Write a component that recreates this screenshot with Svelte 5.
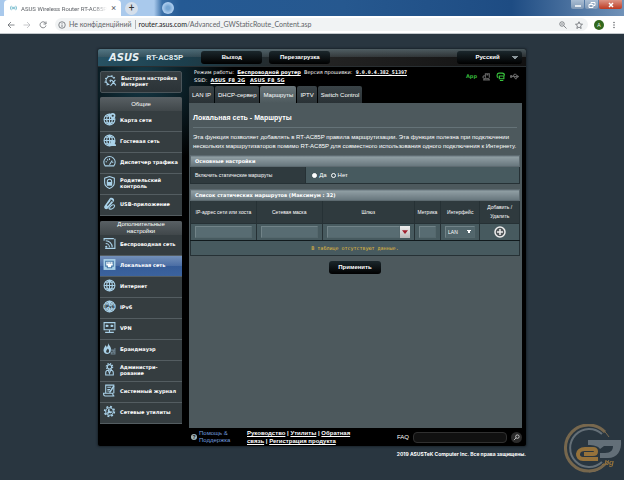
<script lang="ts">
  const generalMenu = [
    { label: 'Карта сети', icon: 'map' },
    { label: 'Гостевая сеть', icon: 'guest' },
    { label: 'Диспетчер трафика', icon: 'gauge' },
    { label: 'Родительский контроль', icon: 'shield' },
    { label: 'USB-приложение', icon: 'usb' }
  ];

  const advancedMenu = [
    { label: 'Беспроводная сеть', icon: 'wifi' },
    { label: 'Локальная сеть', icon: 'lan', active: true },
    { label: 'Интернет', icon: 'globe' },
    { label: 'IPv6', icon: 'ipv6' },
    { label: 'VPN', icon: 'vpn' },
    { label: 'Брандмауэр', icon: 'fire' },
    { label: 'Администри-рование', icon: 'admin' },
    { label: 'Системный журнал', icon: 'log' },
    { label: 'Сетевые утилиты', icon: 'tools' }
  ];

  const menus = [
    { title: 'Общие', items: generalMenu },
    { title: 'Дополнительные настройки', items: advancedMenu }
  ];

  const tabs = ['LAN IP', 'DHCP-сервер', 'Маршруты', 'IPTV', 'Switch Control'];

  let activeTab = $state('Маршруты');
  let staticRoutes = $state('yes');
</script>

{#snippet gear()}
  <circle cx="12" cy="12" r="7" />
  <circle cx="12" cy="12" r="9" stroke-width="3" stroke-dasharray="3.5 3.57" />
{/snippet}

{#snippet globe()}
  <circle cx="12" cy="12" r="10" />
  <path d="M2 12h20M4 6h16M4 18h16M12 2v20M12 2c-7 5-7 15 0 20M12 2c7 5 7 15 0 20" />
{/snippet}

{#snippet menuIcon(name: string)}
  <svg class="icon" viewBox="0 0 24 24" aria-hidden="true">
    {#if name === 'quick'}
      <path d="M10 20a8 8 0 1 1 9-11M7 3l1 3M2 8l3 1M1 15h4M5 21l2-3M15 2l-1 3M20 6l-2 2" />
      <path d="M11 11l4 1 7 9M21 11l-9 11M11 11l1 4" />
    {:else if name === 'map'}
      {@render globe()}
      <path class="solid" d="M18 0a5 5 0 0 1 5 5c0 4-5 8-5 8s-5-4-5-8a5 5 0 0 1 5-5z" />
      <circle class="hole" cx="18" cy="5" r="2" />
    {:else if name === 'guest'}
      {@render globe()}
      <path class="solid" d="M11 22c0-4 2-5 4-5a3 3 0 1 1 3 0 3 3 0 1 1 3 0c2 1 3 2 3 5z" />
    {:else if name === 'gauge'}
      <path d="M4 20a10.500 10.500 0 1 1 16 0zM12 18l5-8M5 12l2 1M8 8l1 2M12 6v3M19 13l-2 1" />
    {:else if name === 'shield'}
      <path d="M12 1l9 3v8c0 6-4 9-9 11-5-2-9-5-9-11V4z" />
      <path d="M8 12v-2a4 4 0 0 1 8 0v2" />
      <rect class="solid" x="7" y="11" width="10" height="7" />
    {:else if name === 'usb'}
      <path class="solid" d="M13 2c5-2 9 2 7 6L9 21c-4 4-9-1-6-5z" />
      <path class="cut" d="M8 16l8-10M14 5l4 3" />
      <path d="M12 20c3-5 7-7 9-5s-2 6-5 7-7 0-4-2z" />
    {:else if name === 'wifi'}
      <path d="M22 3v18H4M2 7V3h18" />
      <path d="M5 7a12 12 0 0 1 12 12M5 12a7 7 0 0 1 7 7" />
      <circle class="solid" cx="6" cy="18" r="2" />
    {:else if name === 'lan'}
      <path class="solid" d="M1 2h22v20H1z" />
      <path class="jack" d="M5 6h14v9h-3v3H8v-3H5z" />
      <path class="pins" d="M8 7v4M11 7v4M14 7v4M17 7v4" />
    {:else if name === 'globe'}
      {@render globe()}
    {:else if name === 'ipv6'}
      {@render globe()}
      <rect class="solid" x="1" y="8" width="22" height="8" />
      <text x="12" y="15" text-anchor="middle">IPv6</text>
    {:else if name === 'vpn'}
      <path d="M2 3h20v13H2zM12 16v6M4 21h16" />
      <path class="bold" d="M5 9h5M14 9h5M7 7v4M16 7v4" />
    {:else if name === 'fire'}
      <path class="solid" d="M9 1c1 5 6 7 6 13 0 5-3 8-7 8s-7-3-7-7c0-4 3-6 3-9 2 1 3 3 3 4 2-3 3-5 2-9z" />
      <path class="hole" d="M9 12c3 3 3 8-1 8-4-1-2-5 1-8z" />
      <path class="bricks" d="M14 15h9M14 19h9M14 22h9M19 15v4M16 19v3M22 11v11" />
    {:else if name === 'admin'}
      <circle cx="12" cy="7" r="4" />
      <circle cx="12" cy="7" r="6" stroke-width="2" stroke-dasharray="2.500 2.210" />
      <path d="M5 22v-4c0-3 3-5 7-5s7 2 7 5v4zM10 14l2 5 2-5" />
    {:else if name === 'log'}
      <path d="M5 17V2h15v15M1 17h17c0 3 1 5 3 5H4c-2 0-3-2-3-5zM8 6h7M8 10h5M8 13h4" />
      <path class="bold" d="M20 4l-8 12" />
    {:else if name === 'tools'}
      {@render gear()}
      <path class="bold" d="M8 16l5-5M12 8a3 3 0 1 0 4 4" />
    {/if}
  </svg>
{/snippet}

<div class="browser">
  <div class="tab-strip">
    <div class="browser-tab">
      <svg class="favicon" viewBox="0 0 16 12" aria-hidden="true">
        <path d="M3 1a8 8 0 0 0 0 10M6 3a5 5 0 0 0 0 6M13 1a8 8 0 0 1 0 10M10 3a5 5 0 0 1 0 6M8 4v4" />
      </svg>
      <span class="tab-title">ASUS Wireless Router RT-AC85P</span>
      <button class="tab-close" aria-label="Закрити">×</button>
    </div>
    <button class="new-tab" aria-label="Нова вкладка">+</button>
    <span class="glow"></span>
    <div class="window-buttons">
      <button aria-label="Згорнути">
        <svg viewBox="0 0 8 6"><path d="M1 4h6" /></svg>
      </button>
      <button aria-label="Відновити">
        <svg viewBox="0 0 8 6"><path class="thin" d="M3 2V.5h4v3H5.500M1 2.500h4v3H1z" /></svg>
      </button>
      <button class="close" aria-label="Закрити вікно">
        <svg viewBox="0 0 8 6"><path d="M2 1l4 4M6 1L2 5" /></svg>
      </button>
    </div>
  </div>

  <div class="toolbar">
    <button aria-label="Назад">
      <svg viewBox="0 0 16 16"><path d="M15 8H2M8 2L2 8l6 6" /></svg>
    </button>
    <button class="disabled" aria-label="Вперед">
      <svg viewBox="0 0 16 16"><path d="M1 8h13M8 2l6 6-6 6" /></svg>
    </button>
    <button aria-label="Оновити">
      <svg viewBox="0 0 16 16"><path d="M14 9a6 6 0 1 1-2-6l2 2M14 1v5H9" /></svg>
    </button>
    <div class="address">
      <svg viewBox="0 0 16 16" aria-hidden="true"><circle cx="8" cy="8" r="6.500" /><path d="M8 7v5M8 4v1.500" /></svg>
      <span class="insecure">Не конфіденційний</span>
      <span class="url"><b>router.asus.com</b>/Advanced_GWStaticRoute_Content.asp</span>
      <svg viewBox="0 0 16 16" aria-hidden="true"><circle cx="6" cy="6" r="4.500" /><path d="M4 6h4M9.500 9.500L15 15" /></svg>
      <svg class="star" viewBox="0 0 16 16" aria-hidden="true"><path d="M8 1.500l2 4.500 5 .5-3.800 3.200L12.300 15 8 12.200 3.700 15l1.100-5.300L1 6.500 6 6z" /></svg>
    </div>
    <span class="avatar">A</span>
    <svg class="dots" viewBox="0 0 4 16" aria-hidden="true"><circle cx="2" cy="3" r="1.500" /><circle cx="2" cy="8" r="1.500" /><circle cx="2" cy="13" r="1.500" /></svg>
  </div>
</div>

<div class="page">
  <div class="router">
    <header class="top">
      <span class="logo">ASUS</span>
      <span class="model">RT-AC85P</span>
      <button class="pill">Выход</button>
      <button class="pill">Перезагрузка</button>
      <select class="pill language" aria-label="Язык">
        <option>Русский</option>
      </select>
    </header>

    <div class="columns">
      <nav class="sidebar">
        <a class="quick" href="#quick">
          {@render menuIcon('quick')}
          <span>Быстрая настройка Интернет</span>
        </a>
        {#each menus as menu}
          <div class="menu">
            <h2>{menu.title}</h2>
            {#each menu.items as item}
              <a class="menu-item" class:active={item.active} href="#{item.icon}">
                {@render menuIcon(item.icon)}
                <span>{item.label}</span>
              </a>
            {/each}
          </div>
        {/each}
      </nav>

      <main>
        <div class="status">
          <div>
            <p>Режим работы:&nbsp; <a href="#mode">Беспроводной роутер</a> &nbsp;Версия прошивки:&nbsp; <a class="mono" href="#fw">9.0.0.4.382_51397</a></p>
            <p>SSID:&nbsp; <a href="#ssid2">ASUS_F8_2G</a> &nbsp; <a href="#ssid5">ASUS_F8_5G</a></p>
          </div>
          <div class="status-icons">
            <span>App</span>
            <svg viewBox="0 0 16 16" aria-hidden="true"><path d="M6 10V3h7v7M3 14c0-4 10-4 10 0zM5 7a2 2 0 1 0-2 4M8 5h3" /></svg>
            <svg class="on" viewBox="0 0 16 16" aria-hidden="true"><path d="M4 10C1 9 1 2 5 2h6c3 0 4 2 4 4M6 7h8v5H6zM7 15h6" /></svg>
            <svg viewBox="0 0 16 16" aria-hidden="true"><path d="M1 8h13M5 8l3-4h3M7 8l3 4h2M12 6l3 2-3 2z" /><circle cx="2" cy="8" r="1.500" /></svg>
          </div>
        </div>

        <div class="tabs">
          {#each tabs as tab}
            <button class:active={activeTab === tab} onclick={() => (activeTab = tab)}>{tab}</button>
          {/each}
        </div>

        <section class="panel">
          <h1>Локальная сеть - Маршруты</h1>
          <p class="description">
            Эта функция позволяет добавлять в RT-AC85P правила маршрутизации. Эта функция полезна при подключении<br />
            нескольких маршрутизаторов помимо RT-AC85P для совместного использования одного подключения к Интернету.
          </p>

          <table class="basic">
            <colgroup>
              <col class="w-label" />
              <col />
            </colgroup>
            <thead>
              <tr><th class="caption" colspan="2">Основные настройки</th></tr>
            </thead>
            <tbody>
              <tr>
                <th scope="row">Включить статические маршруты</th>
                <td>
                  <div class="radios">
                    <label><input type="radio" name="routes" value="yes" bind:group={staticRoutes} />Да</label>
                    <label><input type="radio" name="routes" value="no" bind:group={staticRoutes} />Нет</label>
                  </div>
                </td>
              </tr>
            </tbody>
          </table>

          <table class="routes">
            <colgroup>
              <col class="w-ip" />
              <col class="w-mask" />
              <col class="w-gate" />
              <col class="w-metric" />
              <col class="w-face" />
              <col class="w-face" />
            </colgroup>
            <thead>
              <tr><th class="caption" colspan="6">Список статических маршрутов (Максимум : 32)</th></tr>
              <tr class="heads">
                <th>IP-адрес сети или хоста</th>
                <th>Сетевая маска</th>
                <th>Шлюз</th>
                <th>Метрика</th>
                <th>Интерфейс</th>
                <th class="tall">Добавить / Удалить</th>
              </tr>
            </thead>
            <tbody>
              <tr class="fields">
                <td><input type="text" aria-label="IP-адрес сети или хоста" /></td>
                <td><input type="text" aria-label="Сетевая маска" /></td>
                <td>
                  <div class="combo">
                    <input type="text" aria-label="Шлюз" />
                    <button aria-label="Выбрать шлюз"><svg viewBox="0 0 8 5"><path d="M0 0h8L4 5z" /></svg></button>
                  </div>
                </td>
                <td><input type="text" aria-label="Метрика" /></td>
                <td>
                  <select aria-label="Интерфейс"><option>LAN</option><option>WAN</option></select>
                </td>
                <td>
                  <button class="add" aria-label="Добавить">
                    <svg viewBox="0 0 24 24"><circle cx="12" cy="12" r="10" /><path d="M12 6v12M6 12h12" /></svg>
                  </button>
                </td>
              </tr>
              <tr><td class="empty" colspan="6">В таблице отсутствуют данные.</td></tr>
            </tbody>
          </table>

          <button class="pill apply">Применить</button>
        </section>
      </main>
    </div>

    <footer>
      <span class="help-icon">?</span>
      <a class="help" href="#help">Помощь &amp; Поддержка</a>
      <p class="links">
        <a href="#manual">Руководство</a> | <a href="#utils">Утилиты</a> | <a href="#feedback">Обратная связь</a> | <a href="#register">Регистрация продукта</a>
      </p>
      <label for="faq">FAQ</label>
      <input id="faq" type="text" />
      <button class="search" aria-label="Поиск">
        <svg viewBox="0 0 16 16"><circle cx="10" cy="6" r="4" /><path d="M7 9l-5 5" /></svg>
      </button>
    </footer>
  </div>
  <p class="copyright">2019 ASUSTeK Computer Inc. Все права защищены.</p>
</div>

<svg class="watermark" viewBox="0 0 60 50" aria-hidden="true">
  <path class="ring" d="M41 8A23 23 0 1 0 41 40" />
  <path class="ring-grey" d="M38 10A19 19 0 1 0 38 38" />
  <path class="ring-thin" d="M10 6A24 24 0 0 1 45 13M25 48A23 23 0 0 0 45 36" />
  <path class="swoosh" d="M34 35H19c-7 0-7-10 2-10h8c4 0 4 5 0 5h-9" />
  <path class="grey-swoosh" d="M24 16h33c1 11-4 18-13 18h-8v-5h5c6 0 8-3 8-7h-9l-4 3c-2-3-6-4-12-4z" />
  <text x="38" y="41">.bg</text>
</svg>

<style>
  :global(body) {
    margin: 0;
    min-height: 100vh;
    background: #293640;
    font-family: 'Liberation Sans', Arial, sans-serif;
    font-size: 6px;
    color: #fff;
  }

  :global(#app) {
    position: relative;
  }

  button,
  input,
  select {
    font: inherit;
    color: inherit;
    margin: 0;
    padding: 0;
    border: 0;
    background: none;
    box-sizing: border-box;
  }

  a {
    color: inherit;
  }

  p,
  h1,
  h2 {
    margin: 0;
  }

  svg {
    fill: none;
    stroke: currentColor;
    stroke-width: 1.5;
    flex: none;
  }

  /* browser window */
  .browser {
    font-family: Roboto, sans-serif;
    color: #5f6368;
  }

  .tab-strip {
    display: flex;
    align-items: center;
    height: 16px;
    padding-left: 4px;
    background: linear-gradient(90deg, #a9c9ec 0, #a9c9ec 154px, #3b70a8 162px, #255a94 180px, #26588f 55%, #1e4c83 82%, #7192b8 100%);
  }

  .browser-tab {
    display: flex;
    align-items: center;
    gap: 4px;
    width: 117px;
    height: 16px;
    padding: 0 5px 0 6px;
    box-sizing: border-box;
    background: #fff;
    border-radius: 4px 4px 0 0;
  }

  .favicon {
    width: 7px;
    height: 6px;
    color: #3b9fb8;
  }

  .tab-title {
    flex: 1;
    white-space: nowrap;
    mask-image: linear-gradient(90deg, #000 85%, transparent);
  }

  .tab-close {
    font-size: 9px;
    line-height: 10px;
  }

  .new-tab {
    width: 13px;
    height: 13px;
    margin-left: 4px;
    border-radius: 50%;
    background: #d5dfeb;
    color: #333;
    font-size: 10px;
    line-height: 12px;
  }

  .glow {
    width: 12px;
    height: 12px;
    margin-left: 24px;
    border-radius: 50%;
    background: radial-gradient(#75a5d3 20%, #a8c9ec 60%);
  }

  .window-buttons {
    display: flex;
    align-self: flex-start;
    gap: 1px;
    margin: 0 2px 0 auto;
  }

  .window-buttons button {
    display: grid;
    place-items: center;
    width: 13px;
    height: 9px;
    color: #fff;
    background: linear-gradient(#a9bdd3, #7f98b5);
    border-radius: 0 0 2px 2px;
  }

  .window-buttons svg {
    width: 8px;
    height: 6px;
  }

  .window-buttons .thin {
    stroke-width: 1;
  }

  .window-buttons .close {
    width: 23px;
    background: linear-gradient(#dc9485, #bd3a22);
  }

  .toolbar {
    display: flex;
    align-items: center;
    gap: 8px;
    height: 18px;
    padding: 0 8px 0 7px;
    background: #fff;
    border-bottom: 1px solid #c3c8cc;
    box-sizing: border-box;
    font: 7px/9px Lato, 'Open Sans', sans-serif;
  }

  .toolbar button,
  .toolbar svg {
    display: block;
    width: 8px;
    height: 8px;
  }

  .toolbar .disabled {
    color: #b4b6b9;
  }

  .address {
    display: flex;
    flex: 1;
    align-items: center;
    gap: 3px;
    height: 13px;
    padding: 0 5px 0 3px;
    margin-right: -2px;
    border-radius: 7px;
    background: #f1f3f4;
  }

  .insecure {
    padding-right: 3px;
    border-right: 1px solid #b0b3b6;
  }

  .url {
    flex: 1;
  }

  .url b {
    color: #202124;
    font-weight: 400;
  }

  .address .star {
    margin-left: 5px;
  }

  .avatar {
    width: 10px;
    height: 10px;
    border-radius: 50%;
    background: #33691e;
    color: #fff;
    font-size: 5px;
    line-height: 10px;
    text-align: center;
  }

  .toolbar .dots {
    width: 4px;
    fill: #5f6368;
    stroke: none;
  }

  /* router admin page */
  .page {
    padding: 15px 0;
    background: #293640;
  }

  .router {
    max-width: 428px;
    margin: 0 auto;
    background: #000;
    box-shadow: 0 0 2px 1px #1a242b;
    border-radius: 2px;
  }

  .top {
    display: flex;
    align-items: center;
    gap: 7px;
    height: 18px;
    padding: 0 4px 0 11px;
    border-radius: 2px 2px 0 0;
    background:
      linear-gradient(#7f9ba580, #55626866 45%, transparent 46%),
      linear-gradient(90deg, #285263, #1c3f4d 20%, #262626 45%, #111);
    border-bottom: 1px solid #292f32;
    box-sizing: border-box;
  }

  .logo {
    font: italic bold 10px 'DejaVu Sans', sans-serif;
    color: #e8f0f3;
  }

  .model {
    width: 48px;
    font: bold 8px Roboto, sans-serif;
    color: #dfe9ed;
  }

  .pill {
    width: 61px;
    height: 13px;
    border-radius: 3px;
    background: linear-gradient(#1b272c, #000);
    font-weight: bold;
    line-height: 13px;
    text-align: center;
  }

  .language {
    width: 65px;
    margin-left: auto;
    appearance: none;
    padding-right: 4px;
    background:
      linear-gradient(to bottom right, #8b979c 50%, transparent 51%) right 4px center / 3px 4px no-repeat,
      linear-gradient(to bottom left, #8b979c 50%, transparent 51%) right 7px center / 3px 4px no-repeat,
      linear-gradient(#1b272c, #000);
  }

  .columns {
    display: flex;
    gap: 7px;
    padding: 0 4px 0 2px;
    background: radial-gradient(circle at 45px 10px, #163b49, transparent 90px);
  }

  .sidebar {
    width: 82px;
    flex: none;
    padding-top: 4px;
    font: bold 5px/6px 'DejaVu Sans', Verdana, sans-serif;
  }

  .sidebar a {
    display: flex;
    align-items: center;
    gap: 4px;
    height: 21px;
    padding: 0 2px 3px 3px;
    box-sizing: border-box;
    text-decoration: none;
  }

  .sidebar .quick {
    height: 22px;
    border: 1px solid #4b555a;
    border-radius: 2px;
    background: linear-gradient(#363e42, #2b3337);
  }

  .icon {
    width: 13px;
    height: 13px;
    color: #a9d1e8;
    stroke-width: 2;
  }

  .icon .solid {
    fill: currentColor;
    stroke: none;
  }

  .icon .hole {
    fill: #353d40;
    stroke: none;
  }

  .icon .cut {
    stroke: #353d40;
  }

  .icon .bricks {
    stroke: #6e838f;
  }

  .icon .bold {
    stroke-width: 3;
  }

  .icon .jack {
    fill: #fff;
    stroke: #4378a8;
  }

  .icon .pins {
    stroke: #4378a8;
    stroke-width: 1;
  }

  .icon text {
    fill: #28353b;
    stroke: none;
    font-size: 8px;
  }

  .menu {
    margin-top: 4px;
    border-radius: 2px 2px 0 0;
    background: #353d40;
  }

  .menu + .menu {
    margin-top: 5px;
  }

  .menu h2 {
    display: grid;
    place-items: center;
    height: 14px;
    padding: 0 12px;
    border-radius: 2px 2px 0 0;
    background: linear-gradient(#596064, #40474a);
    font: 6px/7px 'Liberation Sans', Arial, sans-serif;
    text-align: center;
  }

  .menu .menu-item {
    border-bottom: 1px solid #545d61;
  }

  .menu .active {
    background: linear-gradient(#7390b9, #4c6fa5 48%, #355c98 50%, #3c639d);
  }

  main {
    flex: 1;
    min-width: 0;
  }

  .status {
    display: flex;
    justify-content: space-between;
    height: 16px;
    padding: 1px 3px 2px 5px;
    font: 5px/8px 'DejaVu Sans', Verdana, sans-serif;
  }

  .status a {
    font-weight: bold;
  }

  .status .mono {
    font-family: 'DejaVu Sans Mono', monospace;
  }

  .status-icons {
    display: flex;
    align-items: center;
    gap: 5px;
    color: #666;
  }

  .status-icons span {
    color: #35b53a;
    font-weight: bold;
  }

  .status-icons svg {
    width: 9px;
    height: 9px;
    stroke-width: 2;
  }

  .status-icons .on {
    color: #38c23d;
  }

  .tabs {
    display: flex;
    gap: 1px;
  }

  .tabs button {
    height: 17px;
    padding: 0 3px;
    border-radius: 2px 2px 0 0;
    background: linear-gradient(#3a4347, #2a3236);
  }

  .tabs .active {
    background: linear-gradient(#6a767a, #4d595d);
  }

  .panel {
    display: flex;
    flex-direction: column;
    min-height: 325px;
    padding: 10px 2px 0 1px;
    box-sizing: border-box;
    background: #4d595d;
  }

  h1 {
    margin: 0 3px;
    padding-bottom: 4px;
    border-bottom: 1px solid #657378;
    font-size: 7px;
    line-height: 10px;
  }

  .description {
    padding: 5px 3px 4px;
    line-height: 9px;
    white-space: nowrap;
  }

  table {
    width: 100%;
    margin-bottom: 5px;
    border-collapse: collapse;
    table-layout: fixed;
    background: #475a5f;
    font-size: 5px;
  }

  th,
  td {
    padding: 0 4px;
    border: 1px solid #263135;
  }

  th {
    background: #2f3a3e;
    font-weight: 400;
  }

  .caption {
    height: 10px;
    background: linear-gradient(#92a0a5, #66757c);
    border-color: #5d6a70;
    font: bold 5px 'DejaVu Sans', Verdana, sans-serif;
    text-align: left;
  }

  .basic tbody th {
    height: 16px;
    text-align: left;
  }

  .w-label {
    width: 35%;
  }

  .radios,
  .radios label {
    display: flex;
    align-items: center;
    gap: 2px;
  }

  .radios {
    gap: 4px;
    padding-left: 2px;
    font-size: 6px;
  }

  input[type='radio'] {
    appearance: none;
    width: 5px;
    height: 5px;
    border: 1px solid #fff;
    border-radius: 50%;
  }

  input[type='radio']:checked {
    background: #fff;
  }

  .w-ip,
  .w-mask {
    width: 20%;
  }

  .w-gate {
    width: 28%;
  }

  .w-metric {
    width: 8%;
  }

  .w-face {
    width: 12%;
  }

  .heads th {
    height: 22px;
    padding: 0;
    white-space: nowrap;
  }

  .heads .tall {
    padding: 0 6px;
    line-height: 9px;
    white-space: normal;
  }

  .fields td {
    height: 16px;
    border-bottom-color: #111a1d;
    text-align: center;
  }

  .fields input,
  .fields select {
    display: block;
    width: 100%;
    height: 12px;
    border: 1px solid #718388;
    border-color: #718388 #55686d #55686d #718388;
    background: #586c72;
  }

  .fields select {
    appearance: none;
    padding-left: 2px;
    background:
      linear-gradient(to bottom right, #fff 50%, transparent 51%) right 3px center / 2px 4px no-repeat,
      linear-gradient(to bottom left, #fff 50%, transparent 51%) right 5px center / 2px 4px no-repeat,
      #52666c;
  }

  .combo {
    display: flex;
  }

  .combo button {
    display: grid;
    place-items: center;
    width: 10px;
    height: 12px;
    flex: none;
    background: linear-gradient(#eee, #b9b9b9);
  }

  .combo svg {
    width: 6px;
    height: 4px;
    fill: #a01e2c;
    stroke: none;
  }

  .add svg {
    display: block;
    width: 12px;
    height: 12px;
    stroke-width: 3;
    fill: #505659;
    color: #eee;
  }

  td.empty {
    height: 14px;
    color: #e3bd3c;
    font: 5px 'DejaVu Sans Mono', monospace;
    text-align: center;
  }

  .apply {
    align-self: center;
    width: 52px;
  }

  footer {
    display: flex;
    align-items: center;
    height: 18px;
    padding: 0 4px 0 93px;
    line-height: 7px;
  }

  .help-icon {
    width: 6px;
    height: 6px;
    margin-right: 2px;
    border-radius: 50%;
    background: #9fb4b8;
    color: #000;
    font-size: 5px;
    font-weight: bold;
    line-height: 6px;
    text-align: center;
  }

  .help {
    width: 40px;
    margin-right: 8px;
    color: #6f9ade;
    text-decoration: none;
  }

  .links {
    width: 110px;
    font-weight: bold;
    line-height: 8px;
  }

  footer label {
    margin: 0 4px 0 auto;
  }

  footer input {
    width: 94px;
    height: 11px;
    border: 1px solid #303030;
    border-radius: 4px;
    background: #111;
  }

  .search {
    display: grid;
    place-items: center;
    width: 11px;
    height: 11px;
    margin-left: 4px;
    border-radius: 50%;
    background: #2b2b2b;
  }

  .search svg {
    width: 7px;
    height: 7px;
  }

  .copyright {
    max-width: 428px;
    margin: 5px auto 0;
    font: bold 5px/6px Inter, Verdana, sans-serif;
    text-align: right;
  }

  .watermark {
    position: absolute;
    right: 0;
    top: 424px;
    width: 60px;
    height: 50px;
    opacity: 0.6;
  }

  .watermark .ring {
    stroke: #aa8856;
    stroke-width: 3;
  }

  .watermark .ring-grey {
    stroke: #8c969c;
    stroke-width: 2;
  }

  .watermark .ring-thin {
    stroke: #b08d5c;
    stroke-width: 1;
  }

  .watermark .swoosh {
    stroke: #dd9a38;
    stroke-width: 4;
  }

  .watermark .grey-swoosh {
    fill: #8b969e;
    stroke: none;
  }

  .watermark text {
    fill: #dd9a38;
    stroke: none;
    font: italic bold 8px 'Liberation Sans', sans-serif;
  }
</style>
